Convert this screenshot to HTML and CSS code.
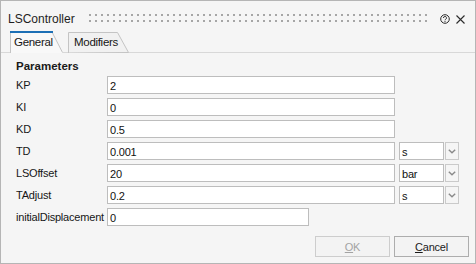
FILE: index.html
```html
<!DOCTYPE html>
<html>
<head>
<meta charset="utf-8">
<title>LSController</title>
<link rel="stylesheet" href="styles.css">
</head>
<body>
<div class="window">
  <div class="titlebar">
    <span class="title">LSController</span>
    <span class="grip"></span>
    <svg class="help" width="10" height="10" viewBox="0 0 10 10">
      <circle cx="5" cy="5" r="4.3" fill="none" stroke="#2b2b2b" stroke-width="1"/>
      <path d="M3.5 4 A1.5 1.5 0 1 1 5.6 5.3 C5.1 5.6 5 5.9 5 6.3" fill="none" stroke="#2b2b2b" stroke-width="1"/>
      <circle cx="5" cy="7.6" r="0.6" fill="#2b2b2b"/>
    </svg>
    <svg class="close" width="9" height="9" viewBox="0 0 9 9">
      <path d="M0.5 0.5 L8.5 8.5 M8.5 0.5 L0.5 8.5" stroke="#2b2b2b" stroke-width="1.1"/>
    </svg>
  </div>
  <div class="tabs">
    <div class="tab tab-general">
      <svg class="tab-shape" width="54" height="22" viewBox="0 0 54 22">
        <polygon points="0,0 42,0 53,22 0,22" fill="#f8f8f8"/>
        <path d="M0.5 22 V1 M42 1 L52.5 21.5" fill="none" stroke="#c4c4c4" stroke-width="1"/>
        <rect x="0" y="0" width="43" height="2" fill="#1c6fb5"/>
      </svg>
      <span class="tab-label">General</span>
    </div>
    <div class="tab tab-modifiers">
      <svg class="tab-shape" width="62" height="22" viewBox="0 0 62 22">
        <polygon points="0.5,22 0.5,1.5 49.5,1.5 60.5,21.5" fill="#f1f1f1" stroke="#c4c4c4" stroke-width="1"/>
      </svg>
      <span class="tab-label">Modifiers</span>
    </div>
  </div>
  <div class="page">
    <div class="heading">Parameters</div>
    <div class="rows">
      <div class="row">
        <span class="label">KP</span>
        <div class="field field-main">2</div>
      </div>
      <div class="row">
        <span class="label">KI</span>
        <div class="field field-main">0</div>
      </div>
      <div class="row">
        <span class="label">KD</span>
        <div class="field field-main">0.5</div>
      </div>
      <div class="row">
        <span class="label">TD</span>
        <div class="field field-main">0.001</div>
        <div class="field combo">s</div>
        <div class="drop"><svg width="8" height="5" viewBox="0 0 8 5"><path d="M0.8 0.8 L4 3.8 L7.2 0.8" fill="none" stroke="#8a8a8a" stroke-width="1.4"/></svg></div>
      </div>
      <div class="row">
        <span class="label">LSOffset</span>
        <div class="field field-main">20</div>
        <div class="field combo">bar</div>
        <div class="drop"><svg width="8" height="5" viewBox="0 0 8 5"><path d="M0.8 0.8 L4 3.8 L7.2 0.8" fill="none" stroke="#8a8a8a" stroke-width="1.4"/></svg></div>
      </div>
      <div class="row">
        <span class="label">TAdjust</span>
        <div class="field field-main">0.2</div>
        <div class="field combo">s</div>
        <div class="drop"><svg width="8" height="5" viewBox="0 0 8 5"><path d="M0.8 0.8 L4 3.8 L7.2 0.8" fill="none" stroke="#8a8a8a" stroke-width="1.4"/></svg></div>
      </div>
      <div class="row">
        <span class="label">initialDisplacement</span>
        <div class="field field-short">0</div>
      </div>
    </div>
    <div class="buttons">
      <button class="btn btn-disabled" disabled><u>O</u>K</button>
      <button class="btn"><u>C</u>ancel</button>
    </div>
  </div>
</div>
</body>
</html>
```

FILE: styles.css
```css
* {
  box-sizing: border-box;
}

body {
  margin: 0;
  font-family: "Liberation Sans", Arial, sans-serif;
  color: #1b1b1b;
}

.window {
  width: 476px;
  height: 264px;
  border: 1px solid #b5b5b5;
  background: #f5f5f5;
  display: flex;
  flex-direction: column;
}

.titlebar {
  height: 30px;
  display: flex;
  align-items: flex-start;
  padding: 10px 10px 0 7px;
}

.title {
  font-size: 12px;
  line-height: 16px;
  color: #1e1e1e;
}

.grip {
  flex: 1;
  height: 8px;
  margin: 3px 10px 0 14px;
  background: conic-gradient(at 2px 2px, transparent 75%, #a6a6a6 0) 0 0 / 6px 6px;
}

.help {
  margin-top: 3px;
}

.close {
  margin: 4px 0 0 6px;
}

.tabs {
  height: 22px;
  display: flex;
  padding-left: 9px;
  background: linear-gradient(#d8d8d8, #d8d8d8) left bottom / 100% 1px no-repeat;
}

.tab {
  position: relative;
  height: 22px;
  font-size: 11.5px;
  letter-spacing: -0.3px;
  line-height: 14px;
  padding-top: 4px;
  color: #161616;
}

.tab-shape {
  position: absolute;
  left: 0;
  top: 0;
}

.tab-label {
  position: relative;
}

.tab-general {
  width: 54px;
  padding-left: 4px;
}

.tab-modifiers {
  width: 62px;
  margin-left: 4px;
  padding-left: 6px;
}

.page {
  flex: 1;
  padding: 6px 6px 0 15px;
  font-size: 11px;
  letter-spacing: -0.2px;
  color: #161616;
}

.heading {
  font-size: 11.5px;
  font-weight: bold;
  letter-spacing: 0;
  line-height: 14px;
  color: #1a1a1a;
}

.rows {
  margin-top: 3px;
  display: flex;
  flex-direction: column;
  gap: 4px;
}

.row {
  height: 18px;
  display: flex;
}

.label {
  width: 91px;
  flex: none;
  line-height: 19px;
  white-space: nowrap;
}

.field {
  height: 18px;
  border: 1px solid #bdbdbd;
  background: #ffffff;
  padding: 1px 0 0 2px;
  line-height: 16px;
  color: #111;
}

.field-main {
  width: 288px;
}

.field-short {
  width: 202px;
}

.combo {
  width: 45px;
  margin-left: 4px;
}

.drop {
  width: 14px;
  height: 18px;
  margin-left: 1px;
  border: 1px solid #cacaca;
  background: #f5f5f5;
  display: flex;
  align-items: center;
  justify-content: center;
}

.buttons {
  margin-top: 10px;
  display: flex;
  justify-content: flex-end;
  gap: 4px;
}

.btn {
  width: 75px;
  height: 21px;
  padding: 0;
  border: 1px solid #adadad;
  background: #f3f3f3;
  font-family: "Liberation Sans", Arial, sans-serif;
  font-size: 11px;
  letter-spacing: -0.2px;
  color: #1b1b1b;
}

.btn-disabled {
  border-color: #cdcdcd;
  color: #a3a3a3;
}
```
